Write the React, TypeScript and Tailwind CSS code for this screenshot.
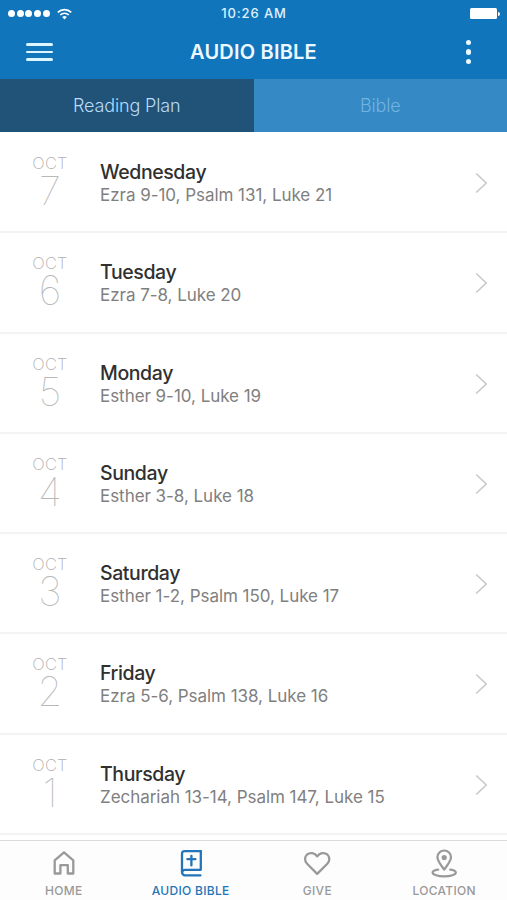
import { useState } from "react";
import clsx from "clsx";

const readings = [
	{ date: 7, day: "Wednesday", passages: "Ezra 9-10, Psalm 131, Luke 21" },
	{ date: 6, day: "Tuesday", passages: "Ezra 7-8, Luke 20" },
	{ date: 5, day: "Monday", passages: "Esther 9-10, Luke 19" },
	{ date: 4, day: "Sunday", passages: "Esther 3-8, Luke 18" },
	{ date: 3, day: "Saturday", passages: "Esther 1-2, Psalm 150, Luke 17" },
	{ date: 2, day: "Friday", passages: "Ezra 5-6, Psalm 138, Luke 16" },
	{ date: 1, day: "Thursday", passages: "Zechariah 13-14, Psalm 147, Luke 15" },
];

const WifiIcon = () => (
	<svg width="15" height="12" viewBox="0 0 15 12" fill="none" stroke="currentColor" strokeWidth="1.7">
		<path d="M0.8 4.4a9.5 9.5 0 0 1 13.4 0" />
		<path d="M3.2 7a6.1 6.1 0 0 1 8.6 0" />
		<path d="M7.5 11.4 5.2 9.1a3.3 3.3 0 0 1 4.6 0z" fill="currentColor" stroke="none" />
	</svg>
);

const HomeIcon = () => (
	<svg width="28" height="30" viewBox="0 0 28 30" fill="none" stroke="currentColor" strokeWidth="2.3" strokeLinejoin="round">
		<path d="M5.7 12.3 15 4.3l9.3 8v13.2h-5.5v-8.3h-7.4v8.3H5.7z" />
	</svg>
);

const BibleIcon = () => (
	<svg width="28" height="30" viewBox="0 0 28 30" fill="none" stroke="currentColor" strokeWidth="2.3" strokeLinecap="round" strokeLinejoin="round">
		<path d="M24.8 3.2H8.6A2.6 2.6 0 0 0 6 5.8v18.5a3 3 0 0 0 3 3h15.5" />
		<path d="M6.2 24a2.8 2.8 0 0 1 2.8-2.2h15.8V3.2" />
		<path d="M15.4 7.8v9.6M11.4 11.2h8" />
	</svg>
);

const HeartIcon = () => (
	<svg width="28" height="30" viewBox="0 0 28 30" fill="none" stroke="currentColor" strokeWidth="2.3" strokeLinejoin="round">
		<path d="M14.2 25.9 4.1 15.8c-2.9-3-2.5-7.1 0-9.3 2.8-2.3 7.7-1.8 10.1 1.9 2.4-3.7 7.3-4.2 10.1-1.9 2.5 2.2 2.9 6.3 0 9.3z" />
	</svg>
);

const LocationIcon = () => (
	<svg width="28" height="30" viewBox="0 0 28 30" fill="none" stroke="currentColor" strokeWidth="2.2" strokeLinecap="round" strokeLinejoin="round">
		<path d="M14.2 21.6c-3.3-4.9-6.8-8.4-6.8-12.3a6.8 6.8 0 0 1 13.6 0c0 3.9-3.5 7.4-6.8 12.3z" />
		<circle cx="14.2" cy="9.6" r="2.6" fill="currentColor" stroke="none" />
		<path d="M8.2 21.6c-3.4.5-5.6 1.5-5.6 2.9 0 2.2 5.2 3.9 11.6 3.9s11.6-1.7 11.6-3.9c0-1.4-2.2-2.4-5.6-2.9" />
	</svg>
);

const navItems = [
	{ label: "HOME", icon: HomeIcon, sx: "tracking-[0.3px] pl-px" },
	{ label: "AUDIO BIBLE", icon: BibleIcon, sx: "tracking-[0.3px] pl-px" },
	{ label: "GIVE", icon: HeartIcon, sx: "tracking-[0.3px] pl-px" },
	{ label: "LOCATION", icon: LocationIcon, sx: "tracking-[0.3px] pl-px" },
];

const Header = () => (
	<header className="w-full h-[79px] shrink-0 bg-[#1175bc] text-white">
		<div className="grid grid-cols-3 items-center h-[27px] pl-2 pr-[7px]">
			<div className="flex items-center gap-[7px]">
				<div className="flex gap-[1.7px]">
					{[0, 1, 2, 3, 4].map((dot) => (
						<span key={dot} className="size-[7px] rounded-full bg-white" />
					))}
				</div>
				<WifiIcon />
			</div>
			<p className="text-center text-[13px] pt-px font-medium tracking-[0.9px] text-[#dff1ff]">10:26 AM</p>
			<div className="flex items-center justify-end gap-px">
				<span className="w-[27px] h-[11.5px] rounded-[1.5px] bg-white" />
				<span className="w-[2px] h-1 rounded-r-full bg-white" />
			</div>
		</div>
		<div className="flex items-center justify-between h-[50px] pl-[26px] pr-9">
			<button aria-label="Menu" className="flex flex-col gap-[5px] text-[#dff5ff]">
				<span className="w-[27px] h-[2.4px] rounded-full bg-current" />
				<span className="w-[27px] h-[2.4px] rounded-full bg-current" />
				<span className="w-[27px] h-[2.4px] rounded-full bg-current" />
			</button>
			<h1 className="text-[20px] font-semibold tracking-[0.2px] pl-[10px] text-[#edf9ff]">AUDIO BIBLE</h1>
			<button aria-label="More" className="flex flex-col items-end w-[27px] gap-[4.3px] pr-0">
				<span className="size-[5.4px] rounded-full bg-[#edf9ff]" />
				<span className="size-[5.4px] rounded-full bg-[#edf9ff]" />
				<span className="size-[5.4px] rounded-full bg-[#edf9ff]" />
			</button>
		</div>
	</header>
);

const App = () => {
	const [activeTab, setActiveTab] = useState("Reading Plan");
	const [activeNav, setActiveNav] = useState("AUDIO BIBLE");

	return (
		<div className="flex flex-col w-full h-[900px] overflow-hidden bg-white font-['Inter',sans-serif]">
			<Header />
			<div className="grid grid-cols-2 h-[53px] shrink-0">
				{["Reading Plan", "Bible"].map((tab) => (
					<button
						key={tab}
						onClick={() => setActiveTab(tab)}
						className={clsx("text-[18px] font-light tracking-[-0.15px]", activeTab === tab ? "bg-[#215278] text-[#b9dcf8]" : "bg-[#358ac5] text-[#72b2e0]")}>
						{tab}
					</button>
				))}
			</div>

			<ul className="flex-1 min-h-0 pt-px overflow-hidden">
				{readings.map(({ date, day, passages }) => (
					<li key={date} className="flex items-center h-[100.25px] pr-[19px] border-b-2 border-[#f3f3f3]">
						<div className="flex flex-col items-center w-[100px] pb-[3px]">
							<span className="text-[16.5px] leading-[20px] font-extralight tracking-[0.2px] text-[#b0b0b0]">OCT</span>
							<span className="text-[40px] leading-[35px] font-thin text-[#b8b8b8]">{date}</span>
						</div>
						<div className="flex-1 pt-[2px]">
							<h3 className="text-[19.5px] leading-[24px] font-medium tracking-[-0.4px] text-[#303030]">{day}</h3>
							<p className="text-[17px] leading-[22px] tracking-[-0.04px] text-[#808080]">{passages}</p>
						</div>
						<svg className="mt-[2px]" width="13" height="22" viewBox="0 0 13 22" fill="none" stroke="#c9c9c9" strokeWidth="1.6">
							<path d="M1.2 1.5 11.2 11 1.2 20.5" />
						</svg>
					</li>
				))}
			</ul>

			<nav className="grid grid-cols-4 h-[60px] shrink-0 border-t border-[#dcdcdc] bg-[#fdfdfd]">
				{navItems.map(({ label, icon: Icon, sx }) => (
					<button
						key={label}
						onClick={() => setActiveNav(label)}
						className={clsx("flex flex-col items-center pt-[7px]", activeNav === label ? "text-[#2374b8]" : "text-[#999999]")}>
						<Icon />
						<span className={clsx("text-[12px] leading-[15px] mt-[5px] font-medium whitespace-nowrap", sx)}>{label}</span>
					</button>
				))}
			</nav>
		</div>
	);
};

export default App;
